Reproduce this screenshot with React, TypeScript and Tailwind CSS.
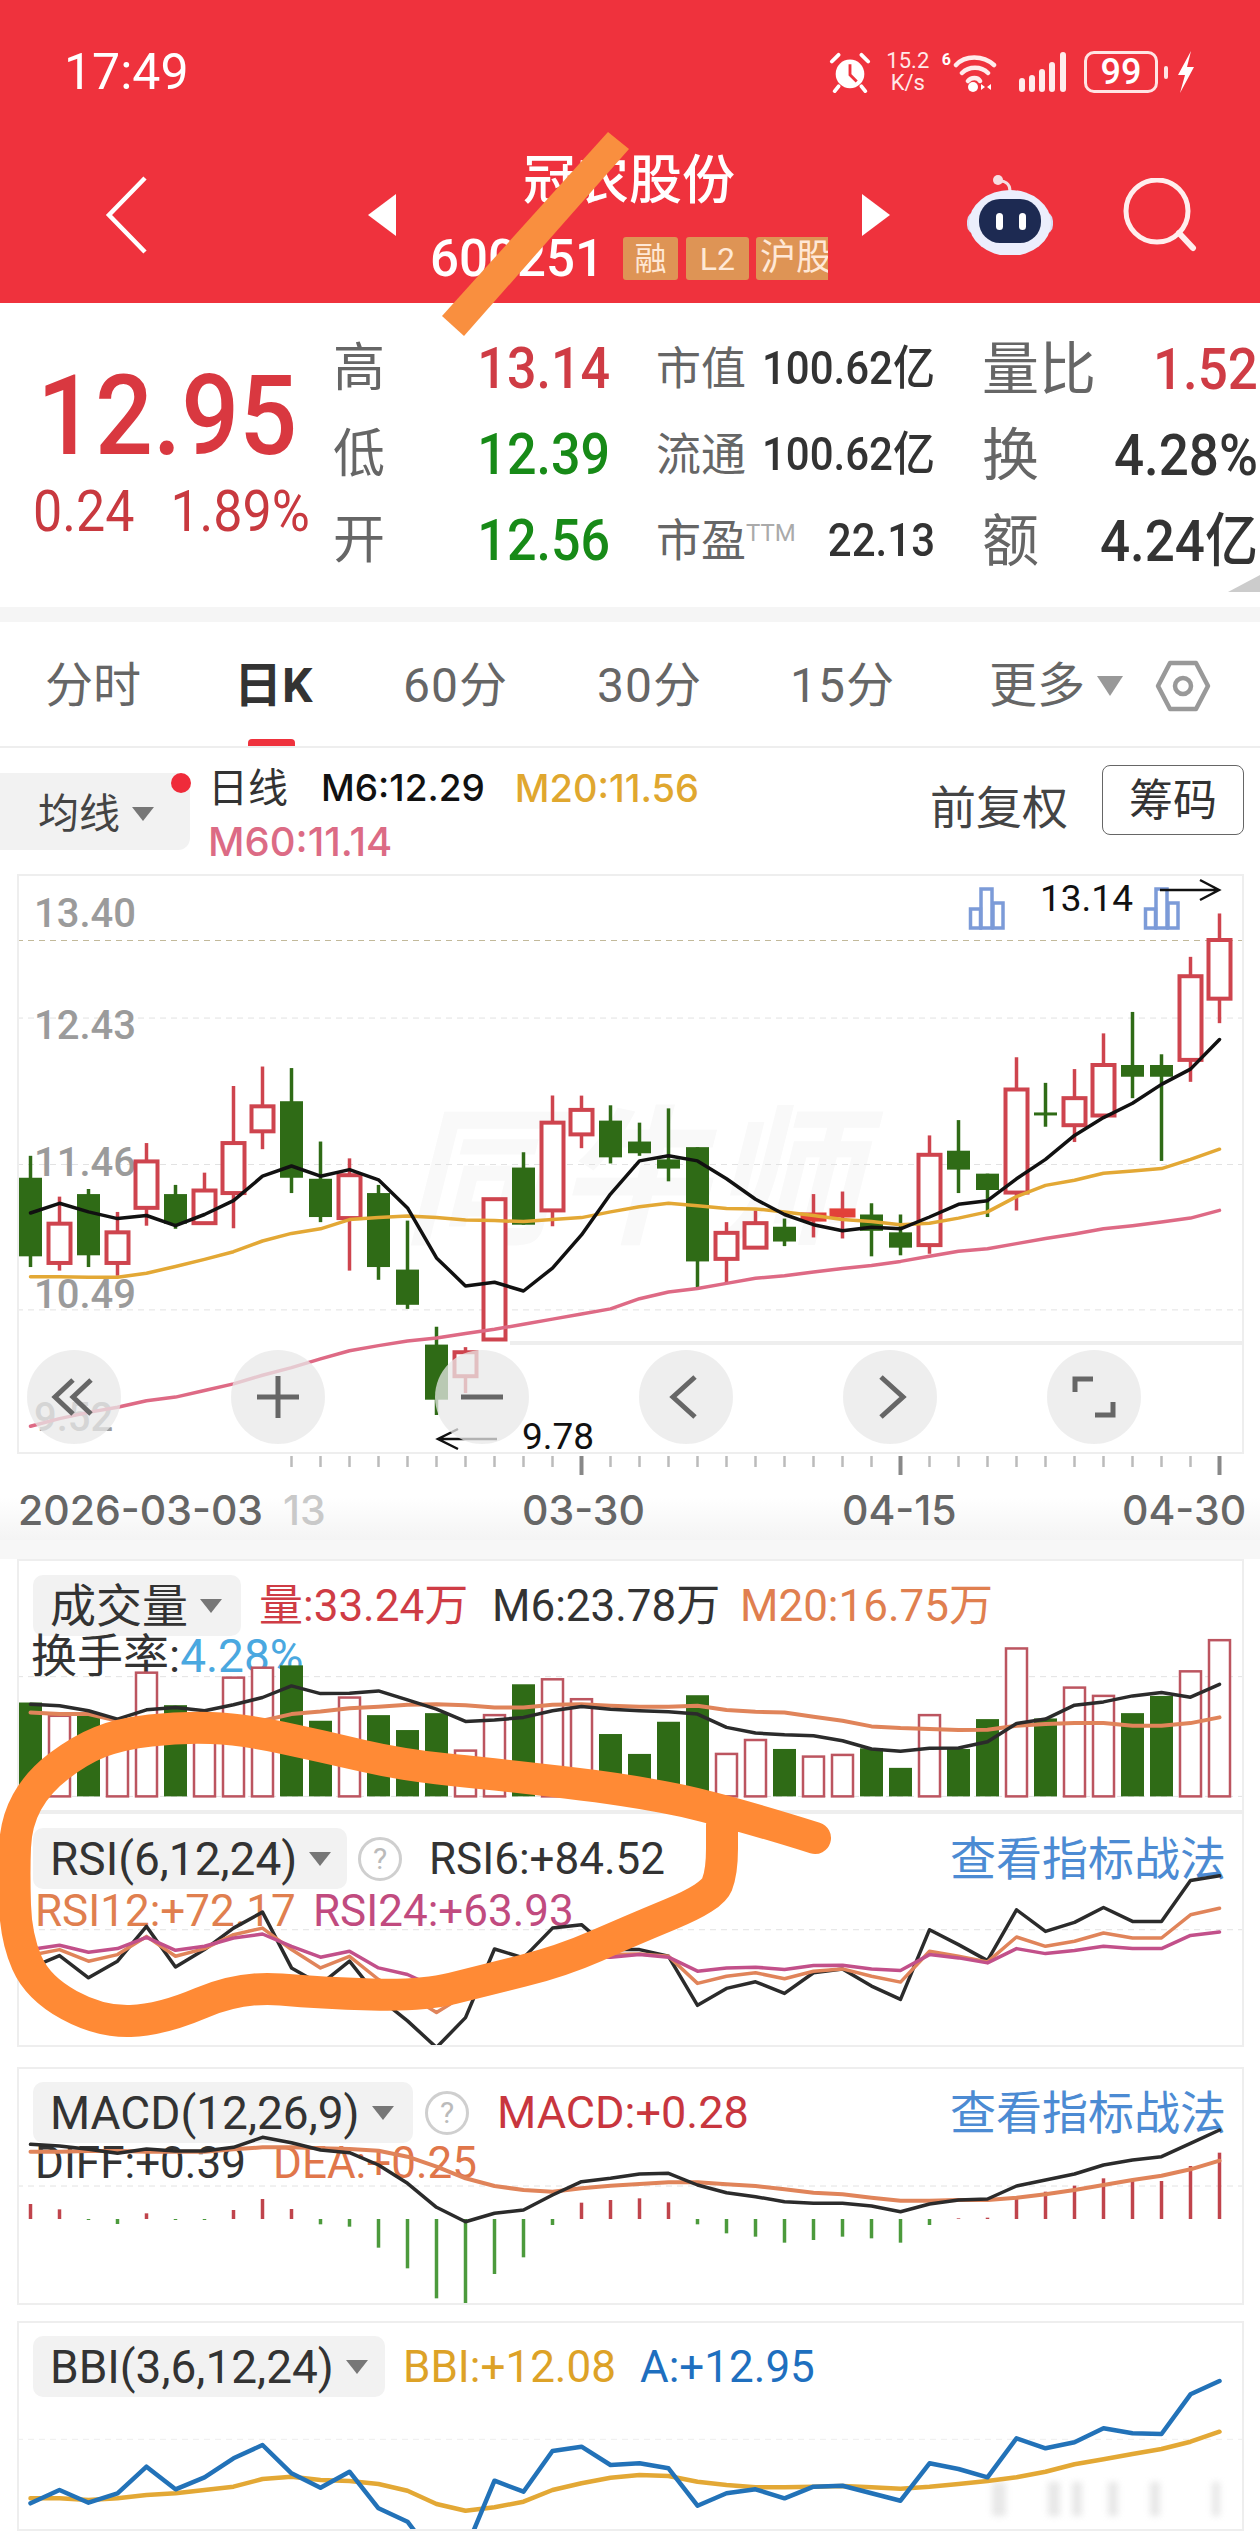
import React from "react";

// x of the n-th bar, same for all the charts
const xAt = (i: number) => 30.5 + 29 * i;

const yMain = (z: number) => 740 + z / 1.96;
const yVol = (z: number) => 1540 + z / 3.015;
const yLow = (z: number) => 2050 + z / 3;

const RED = "#CE444E";
const GREEN = "#2F6B16";

// high, top, bottom, low, up?
const candles: [number, number, number, number, boolean][] = [
  [815, 858, 1012, 1033, false],
  [895, 948, 1025, 1040, true],
  [880, 890, 1010, 1033, false],
  [925, 965, 1025, 1050, true],
  [790, 826, 917, 952, true],
  [872, 890, 948, 958, false],
  [848, 883, 947, 948, true],
  [678, 790, 888, 957, true],
  [640, 718, 767, 802, true],
  [643, 708, 858, 888, false],
  [787, 860, 935, 945, false],
  [820, 853, 937, 1040, true],
  [872, 888, 1033, 1058, false],
  [942, 1038, 1107, 1115, false],
  [1150, 1185, 1293, 1323, false],
  [1190, 1200, 1247, 1280, true],
  [900, 900, 1175, 1175, true],
  [808, 838, 950, 950, false],
  [697, 750, 922, 953, true],
  [697, 725, 773, 800, true],
  [716, 746, 818, 830, false],
  [750, 787, 810, 815, false],
  [722, 822, 840, 865, false],
  [798, 798, 1022, 1072, false],
  [945, 966, 1017, 1065, true],
  [922, 947, 995, 997, true],
  [938, 954, 983, 992, false],
  [890, 930, 940, 975, true],
  [885, 922, 932, 977, true],
  [908, 930, 962, 1012, false],
  [930, 965, 995, 1010, false],
  [775, 813, 990, 1007, true],
  [745, 805, 842, 888, false],
  [850, 850, 882, 935, false],
  [622, 685, 887, 922, true],
  [672, 730, 735, 758, false],
  [645, 702, 755, 788, true],
  [575, 637, 736, 738, true],
  [533, 637, 660, 702, false],
  [616, 637, 660, 825, false],
  [425, 463, 627, 670, true],
  [340, 392, 507, 555, true],
];
const m6 = [927, 908, 925, 938, 932, 952, 930, 903, 855, 835, 855, 842, 862, 917, 1015, 1070, 1063, 1080, 1035, 970, 890, 825, 815, 825, 860, 900, 930, 950, 962, 955, 958, 935, 910, 903, 860, 822, 775, 740, 712, 675, 645, 587];
const m20 = [1052, 1052, 1053, 1053, 1045, 1032, 1018, 1003, 982, 967, 958, 940, 936, 933, 936, 941, 942, 944, 940, 936, 925, 915, 908, 913, 918, 919, 925, 932, 940, 944, 950, 947, 937, 925, 895, 873, 863, 849, 845, 840, 822, 802];
const m60 = [1345, 1330, 1318, 1308, 1295, 1288, 1275, 1262, 1245, 1230, 1213, 1197, 1187, 1178, 1172, 1163, 1155, 1145, 1135, 1125, 1115, 1095, 1082, 1075, 1065, 1055, 1050, 1043, 1036, 1030, 1022, 1012, 1002, 997, 987, 977, 968, 958, 952, 945, 937, 922];

const volTops = [490, 530, 530, 590, 400, 498, 560, 415, 385, 378, 545, 475, 528, 573, 522, 635, 528, 435, 420, 480, 585, 645, 548, 468, 645, 603, 630, 653, 648, 628, 687, 528, 630, 540, 327, 538, 445, 470, 522, 470, 396, 302];
const volUp = [false, true, false, true, true, false, true, true, true, false, false, true, false, false, false, true, true, false, true, true, false, false, false, false, true, true, false, true, true, false, false, true, false, false, true, false, true, true, false, false, true, true];
const volBlack = [495, 500, 515, 540, 512, 505, 515, 497, 475, 440, 463, 462, 455, 482, 510, 547, 543, 535, 515, 502, 510, 515, 518, 525, 565, 582, 587, 590, 605, 630, 637, 628, 627, 608, 553, 540, 498, 488, 470, 460, 474, 435];
const volOrange = [520, 525, 525, 545, 540, 540, 540, 545, 545, 525, 517, 507, 503, 497, 495, 498, 505, 505, 497, 495, 500, 503, 503, 500, 513, 518, 520, 533, 545, 562, 567, 570, 573, 572, 560, 555, 552, 552, 560, 560, 552, 535];

const rsi6 = [1290, 1253, 1320, 1270, 1165, 1287, 1235, 1170, 1122, 1290, 1340, 1270, 1380, 1450, 1530, 1440, 1233, 1260, 1170, 1160, 1235, 1235, 1255, 1403, 1352, 1332, 1367, 1305, 1293, 1345, 1385, 1175, 1220, 1268, 1115, 1180, 1153, 1108, 1150, 1150, 1027, 1012];
const rsi12 = [1252, 1235, 1270, 1250, 1195, 1255, 1232, 1190, 1170, 1235, 1290, 1255, 1325, 1370, 1425, 1370, 1300, 1300, 1250, 1240, 1250, 1248, 1255, 1337, 1315, 1305, 1323, 1300, 1293, 1315, 1333, 1240, 1255, 1272, 1197, 1225, 1210, 1185, 1200, 1200, 1130, 1110];
const rsi24 = [1235, 1222, 1243, 1232, 1198, 1237, 1225, 1200, 1188, 1225, 1258, 1240, 1290, 1310, 1350, 1330, 1300, 1290, 1265, 1255, 1258, 1250, 1258, 1300, 1290, 1288, 1295, 1283, 1282, 1293, 1298, 1250, 1260, 1275, 1232, 1247, 1238, 1225, 1232, 1232, 1192, 1182];

const macdBars = [462, 478, 510, 522, 490, 510, 510, 480, 447, 477, 523, 530, 593, 655, 745, 765, 672, 622, 525, 458, 450, 445, 457, 523, 550, 560, 578, 570, 560, 565, 578, 525, 505, 503, 447, 425, 407, 385, 388, 393, 348, 308];
const diff = [283, 288, 298, 310, 297, 303, 303, 292, 262, 278, 300, 308, 345, 400, 472, 515, 490, 480, 435, 395, 385, 372, 370, 405, 428, 440, 455, 460, 460, 468, 485, 462, 450, 447, 408, 390, 372, 345, 330, 320, 280, 240];
const dea = [305, 305, 303, 303, 305, 305, 305, 298, 292, 292, 295, 297, 302, 320, 350, 385, 408, 420, 425, 415, 407, 402, 397, 397, 403, 408, 418, 428, 433, 443, 452, 452, 450, 450, 443, 433, 420, 405, 390, 377, 358, 332];

const bbiA = [1360, 1320, 1358, 1330, 1250, 1318, 1282, 1225, 1185, 1270, 1313, 1265, 1375, 1415, 1530, 1500, 1292, 1325, 1203, 1190, 1245, 1240, 1255, 1367, 1330, 1318, 1345, 1310, 1307, 1330, 1352, 1240, 1257, 1282, 1165, 1195, 1177, 1135, 1150, 1152, 1033, 993];
const bbiY = [1345, 1345, 1350, 1345, 1335, 1330, 1320, 1310, 1287, 1280, 1290, 1293, 1302, 1322, 1362, 1382, 1372, 1355, 1320, 1300, 1283, 1275, 1278, 1295, 1305, 1312, 1312, 1310, 1308, 1312, 1316, 1310, 1302, 1293, 1282, 1265, 1243, 1228, 1212, 1197, 1175, 1145];

const Line = ({ data, y, color, w = 3.5 }: { data: number[]; y: (z: number) => number; color: string; w?: number }) => (
  <polyline
    points={data.map((z, i) => `${xAt(i)},${y(z).toFixed(1)}`).join(" ")}
    fill="none"
    stroke={color}
    strokeWidth={w}
    strokeLinejoin="round"
    strokeLinecap="round"
  />
);

const Dash = ({ y, color = "#e2e2e2" }: { y: number; color?: string }) => (
  <line x1={17} x2={1244} y1={y} y2={y} stroke={color} strokeWidth={1} strokeDasharray="6 5" />
);

const Triangle = ({ className = "" }: { className?: string }) => (
  <svg viewBox="0 0 22 14" className={`w-[22px] h-[14px] shrink-0 ${className}`}>
    <path d="M0 0H22L11 14Z" fill="#777" />
  </svg>
);

const Selector = ({ label, width }: { label: string; width: string }) => (
  <div className={`${width} h-[61px] bg-[#f2f2f2] rounded-[10px] flex items-center pl-[17px] shrink-0`}>
    <span className="text-[46px] leading-none text-[#333] whitespace-nowrap">{label}</span>
    <Triangle className="ml-[12px]" />
  </div>
);

const Help = () => (
  <div className="w-[44px] h-[44px] rounded-full border-[3px] border-[#cfcfcf] text-[#bbb] text-[30px] leading-none flex items-center justify-center shrink-0">?</div>
);

const Tactics = () => (
  <span className="ml-auto mr-[18px] text-[46px] leading-none text-[#4C8BD3] whitespace-nowrap">查看指标战法</span>
);

const Mini = ({ d, className = "" }: { d: string; className?: string }) => (
  <svg viewBox="0 0 50 50" className={`w-[50px] h-[50px] ${className}`} fill="none" stroke="#666" strokeWidth={5}>
    <path d={d} />
  </svg>
);

const StatusBar = () => (
  <div className="h-[144px] flex items-center pl-[64px] pr-[65px] text-white">
    <span className="text-[50px] leading-none">17:49</span>
    <div className="ml-auto flex items-center">
      <svg viewBox="0 0 44 44" className="w-[42px] h-[42px]">
        <circle cx="22" cy="24" r="15" fill="#fff" />
        <path d="M22 14V25L29 32" stroke="#EF323D" strokeWidth="3" fill="none" />
        <path d="M3 11L10 4M41 11L34 4M10 37L6 42M34 37L38 42" stroke="#fff" strokeWidth="4" strokeLinecap="round" />
      </svg>
      <div className="ml-[13px] w-[48px] flex flex-col items-center text-[22px] leading-[22px] text-[#ffe9e9]">
        <span>15.2</span>
        <span>K/s</span>
      </div>
      <span className="ml-[10px] self-start mt-[2px] text-[16px] leading-none font-bold">6</span>
      <svg viewBox="0 0 44 42" className="ml-[2px] w-[44px] h-[42px]">
        <path d="M3 14C12 4 30 4 41 14M9 22C16 15 28 15 35 22M15 30C18 26 25 26 27 30" stroke="#ffecec" strokeWidth="4.5" fill="none" strokeLinecap="round" />
        <circle cx="20" cy="36" r="5" fill="#fff" />
        <path d="M28 33V39L32 36ZM38 33V39L34 36Z" fill="#fff" />
      </svg>
      <svg viewBox="0 0 50 40" className="ml-[22px] w-[50px] h-[40px]">
        <path d="M3 29V37M13 26V37M23 20V37M33 13V37M44 3V37" stroke="#ffecec" strokeWidth="6" strokeLinecap="round" />
      </svg>
      <div className="ml-[15px] w-[74px] h-[42px] rounded-[10px] border-[3px] border-[#ffe4e4] flex items-center justify-center text-[36px] leading-none font-medium">99</div>
      <div className="ml-[6px] w-[4px] h-[13px] rounded bg-[#ffe4e4]"></div>
      <svg viewBox="0 0 18 42" className="ml-[9px] w-[18px] h-[42px]">
        <path d="M14 0L1 24H8L3 42L17 16H10Z" fill="#fff" />
      </svg>
    </div>
  </div>
);

const NavBar = () => (
  <div className="h-[159px] pb-[18px] pl-[105px] flex items-center text-white">
    <svg viewBox="0 0 42 78" className="w-[42px] h-[78px] shrink-0">
      <path d="M40 2L4 39L40 76" fill="none" stroke="#fff" strokeWidth="4.5" />
    </svg>
    <svg viewBox="0 0 28 42" className="ml-[221px] w-[28px] h-[42px] shrink-0">
      <path d="M28 0V42L0 21Z" fill="#fff" />
    </svg>
    <div className="w-[466px] h-[132px] shrink-0 flex flex-col items-center">
      <span className="text-[53px] leading-[64px] font-medium">冠农股份</span>
      <div className="mt-[24px] h-[44px] flex items-center">
        <span className="text-[51px] leading-none font-medium">600251</span>
        <span className="ml-[19px] w-[55px] h-[43px] rounded-[3px] bg-[#DE9455] text-[#ffe8d6] text-[32px] leading-none flex items-center justify-center">融</span>
        <span className="ml-[8px] w-[63px] h-[43px] rounded-[3px] bg-[#DE9455] text-[#ffe8d6] text-[32px] leading-none flex items-center justify-center">L2</span>
        <span className="ml-[7px] w-[72px] h-[43px] overflow-hidden rounded-l-[3px] bg-[#DE9455] text-[#ffe8d6] text-[36px] leading-[43px] pl-[4px] whitespace-nowrap">沪股</span>
      </div>
    </div>
    <svg viewBox="0 0 28 42" className="w-[28px] h-[42px] shrink-0">
      <path d="M0 0V42L28 21Z" fill="#fff" />
    </svg>
    <svg viewBox="0 0 90 80" className="ml-[76px] w-[90px] h-[80px] shrink-0">
      <path d="M44 16C44 8 38 6 34 6" stroke="#f4dfe3" strokeWidth="3" fill="none" />
      <circle cx="32" cy="5" r="5" fill="#f6dfe3" />
      <rect x="1" y="36" width="86" height="24" rx="10" fill="#d9dcf3" />
      <ellipse cx="44" cy="48" rx="41" ry="33" fill="#eceefc" />
      <rect x="13" y="24" width="62" height="44" rx="21" fill="#1d2a52" />
      <rect x="30" y="38" width="7" height="17" rx="3.5" fill="#fff" />
      <rect x="53" y="38" width="7" height="17" rx="3.5" fill="#fff" />
    </svg>
    <svg viewBox="0 0 74 74" className="ml-[67px] w-[74px] h-[74px] shrink-0">
      <circle cx="34" cy="33" r="31" fill="none" stroke="#ffeeee" strokeWidth="5" />
      <path d="M56 55L70 70" stroke="#ffeeee" strokeWidth="6" strokeLinecap="round" />
    </svg>
  </div>
);

const statRows = [
  { l: "高", v: "13.14", vc: "text-[#CF3C45]", a: "市值", av: "100.62亿", b: "量比", bv: "1.52", bc: "text-[#CF3C45]" },
  { l: "低", v: "12.39", vc: "text-[#178A17]", a: "流通", av: "100.62亿", b: "换", bv: "4.28%", bc: "text-[#333]" },
  { l: "开", v: "12.56", vc: "text-[#178A17]", a: "市盈", av: "22.13", b: "额", bv: "4.24亿", bc: "text-[#333]" },
];

const Quote = () => (
  <div className="relative h-[304px] pl-[33px] flex">
    <div className="w-[300px] shrink-0 pt-[52px]">
      <div className="pl-[4px] text-[102px] leading-[120px] text-[#D93840] font-medium scale-y-[1.1]">12.95</div>
      <div className="mt-[7px] text-[52px] leading-[60px] text-[#C8393F] whitespace-nowrap scale-y-[1.1]">
        0.24<span className="ml-[36px]">1.89%</span>
      </div>
    </div>
    <div className="pt-[23px] grid grid-cols-[52px_225px_135px_190px_158px_165px] auto-rows-[86px] items-center">
      {statRows.map((r) => (
        <React.Fragment key={r.l}>
          <span className="text-[52px] leading-none text-[#666]">{r.l}</span>
          <span className={`text-right text-[52px] leading-none font-medium scale-y-[1.1] ${r.vc}`}>{r.v}</span>
          <span className="pl-[46px] text-[45px] leading-none text-[#666] whitespace-nowrap">
            {r.a}
            {r.a === "市盈" && <sup className="text-[24px] text-[#aaa] top-[-16px] align-baseline relative">TTM</sup>}
          </span>
          <span className="text-right text-[42px] leading-none text-[#333] font-medium scale-y-[1.1]">{r.av}</span>
          <span className="pl-[47px] text-[57px] leading-none text-[#666] whitespace-nowrap">{r.b}</span>
          <span className={`text-right text-[53px] leading-none font-medium whitespace-nowrap scale-y-[1.1] ${r.bc}`}>{r.bv}</span>
        </React.Fragment>
      ))}
    </div>
    <svg viewBox="0 0 32 17" className="absolute right-0 bottom-[15px] w-[32px] h-[17px]">
      <path d="M0 17L32 0V17Z" fill="#ccc" />
    </svg>
  </div>
);

const Tabs = () => (
  <div className="h-[126px] pt-[3px] border-b-[2px] border-[#eee] flex items-center pl-[45px] text-[48px] leading-[56px] text-[#666] whitespace-nowrap">
    <span className="w-[189px]">分时</span>
    <span className="relative w-[169px] font-bold text-[#333]">
      日K
      <span className="absolute left-[14px] top-[81px] w-[47px] h-[7px] rounded-t bg-[#EF323D]"></span>
    </span>
    <span className="w-[194px] tracking-[1px]">60分</span>
    <span className="w-[193px] tracking-[1px]">30分</span>
    <span className="w-[199px] tracking-[1px]">15分</span>
    <span className="w-[108px]">更多</span>
    <svg viewBox="0 0 26 20" className="w-[26px] h-[20px]">
      <path d="M0 0H26L13 20Z" fill="#999" />
    </svg>
    <svg viewBox="0 0 56 52" className="ml-[32px] w-[56px] h-[52px]">
      <path d="M15 3H41L53 26L41 49H15L3 26Z" fill="none" stroke="#999" strokeWidth="4.5" strokeLinejoin="round" />
      <circle cx="28" cy="26" r="8" fill="none" stroke="#999" strokeWidth="4.5" />
    </svg>
  </div>
);

const Legend = () => (
  <div className="h-[126px] flex items-start [font-family:Inter,'Noto_Sans_CJK_SC',sans-serif]">
    <div className="relative mt-[25px] w-[190px] h-[77px] bg-[#f2f2f2] rounded-r-[12px] flex items-center pl-[38px] pt-[4px] shrink-0">
      <span className="text-[41px] leading-none text-[#444]">均线</span>
      <Triangle className="ml-[12px]" />
      <span className="absolute left-[171px] top-[0px] w-[20px] h-[20px] rounded-full bg-[#EF2B3A]"></span>
    </div>
    <div className="ml-[18px] pt-[15px] text-[37px] leading-[50px] font-medium whitespace-nowrap">
      <div className="flex">
        <span className="text-[40px] font-normal text-[#333]">日线</span>
        <span className="ml-[33px] text-[#111]">M6:12.29</span>
        <span className="ml-[30px] text-[38px] text-[#E0A72F]">M20:11.56</span>
      </div>
      <div className="mt-[4px] text-[40px] text-[#DC6B85]">M60:11.14</div>
    </div>
    <div className="ml-auto mr-[16px] flex items-start pt-[17px]">
      <span className="mt-[14px] text-[46px] leading-[56px] text-[#444]">前复权</span>
      <span className="ml-[34px] w-[142px] h-[70px] border border-[#666] rounded-[8px] text-[44px] leading-none text-[#333] flex items-center justify-center">筹码</span>
    </div>
  </div>
);

const ChartButtons = () => (
  <div className="col-start-1 row-start-1 pl-[10px] pt-[476px] flex gap-[110px]">
    {[
      "M24 8L6 25L24 42M42 8L24 25L42 42",
      "M4 25H46M25 4V46",
      "M4 25H46",
      "M34 5L12 25L34 45",
      "M16 5L38 25L16 45",
      "M6 20V7H24M44 30V43H26",
    ].map((d) => (
      <div key={d} className="w-[94px] h-[94px] rounded-full bg-[#e8e8e8]/75 flex items-center justify-center shrink-0">
        <Mini d={d} />
      </div>
    ))}
  </div>
);

const BarIcon = ({ x }: { x: number }) => (
  <g fill="none" stroke="#7C9BD8" strokeWidth="3.5">
    <rect x={x + 1.5} y={909} width={10} height={19} />
    <rect x={x + 12} y={889} width={11} height={39} />
    <rect x={x + 24} y={903} width={10} height={25} />
  </g>
);

const MainChart = () => (
  <div className="ml-[17px] w-[1227px] h-[580px] grid outline-2 -outline-offset-2 outline-[#eeeeee]">
    <svg viewBox="17 874 1227 580" className="col-start-1 row-start-1 w-full h-full overflow-visible [font-family:Roboto,'Noto_Sans_CJK_SC',sans-serif]">
      <text x="403" y="1232" fontSize="150" fontWeight="700" fontStyle="italic" fill="#f9f9f9" textLength="457">同牛师</text>
      <rect x="510" y="1341" width="734" height="4" fill="#eeeeee" />
      <Dash y={yMain(393)} color="#c2b99a" />
      <Dash y={yMain(545)} />
      <Dash y={yMain(832)} />
      <Dash y={yMain(1117)} />
      <g fontSize="40" fill="#9b9b9b" fontWeight="500">
        <text x="34" y="927">13.40</text>
        <text x="34" y="1039">12.43</text>
        <text x="34" y="1176">11.46</text>
        <text x="34" y="1308">10.49</text>
        <text x="34" y="1431">9.52</text>
      </g>
      {candles.map(([h, t, b, l, up], i) => {
        const x = xAt(i);
        const c = up ? RED : GREEN;
        const flat = up && b - t < 20;
        return (
          <g key={i}>
            <line x1={x} x2={x} y1={yMain(h)} y2={yMain(l)} stroke={c} strokeWidth={3.5} />
            {up ? (
              <rect
                x={x - 11}
                y={yMain(t)}
                width={22}
                height={yMain(b) - yMain(t)}
                fill={flat ? "#E2403A" : "#fff"}
                stroke={flat ? "#E2403A" : c}
                strokeWidth={4}
              />
            ) : (
              <rect x={x - 11.5} y={yMain(t)} width={23} height={Math.max(yMain(b) - yMain(t), 3)} fill={c} />
            )}
          </g>
        );
      })}
      <Line data={m20} y={yMain} color="#E3A835" />
      <Line data={m60} y={yMain} color="#DE6A85" />
      <Line data={m6} y={yMain} color="#111" />
      <BarIcon x={969} />
      <BarIcon x={1144} />
      <g fill="#111" fontSize="37">
        <text x="1040" y="911">13.14</text>
        <text x="522" y="1449">9.78</text>
      </g>
      <path d="M1160 890H1219M1200 880L1219 890L1200 900" fill="none" stroke="#111" strokeWidth="2.5" />
      <path d="M497 1439H438M458 1429L438 1439L458 1449" fill="none" stroke="#111" strokeWidth="2.5" />
    </svg>
    <ChartButtons />
  </div>
);

const TimeAxis = () => (
  <div className="h-[86px] bg-linear-to-b from-white from-50% to-[#f4f4f4]">
    <svg viewBox="0 1454 1260 24" className="block w-[1260px] h-[24px]">
      {candles.map((_, i) => {
        if (i < 9) return null;
        const big = i === 19 || i === 30 || i === 41;
        return <line key={i} x1={xAt(i)} x2={xAt(i)} y1={1456} y2={big ? 1475 : 1467} stroke={big ? "#888" : "#bbb"} strokeWidth={big ? 4 : 2.5} />;
      })}
    </svg>
    <div className="pl-[18px] h-[60px] pt-[4px] flex items-center text-[41px] leading-none font-medium text-[#666] whitespace-nowrap [font-family:Inter,sans-serif]">
      <span className="w-[265px]">2026-03-03</span>
      <span className="w-[239px] text-[#c9c9c9]">13</span>
      <span className="w-[320px]">03-30</span>
      <span className="w-[280px]">04-15</span>
      <span>04-30</span>
    </div>
  </div>
);

const VolumePanel = () => (
  <div className="ml-[17px] w-[1227px] h-[253px] grid outline-2 -outline-offset-2 outline-[#eeeeee]">
    <div className="col-start-1 row-start-1 pl-[16px] pt-[16px]">
      <div className="flex items-center text-[44px] leading-none whitespace-nowrap">
        <Selector label="成交量" width="w-[208px]" />
        <span className="ml-[18px] w-[233px] text-[#CF3C45]">量:33.24万</span>
        <span className="w-[248px] text-[#333]">M6:23.78万</span>
        <span className="text-[#E07F4F]">M20:16.75万</span>
      </div>
      <div className="text-[46px] leading-[46px] mt-[-3px] ml-[-2px] text-[#333] whitespace-nowrap">
        换手率:<span className="text-[#4AA8E0]">4.28%</span>
      </div>
    </div>
    <svg viewBox="17 1559 1227 253" className="col-start-1 row-start-1 w-full h-full">
      <Dash y={yVol(412)} />
      <Dash y={yVol(773)} />
      {volTops.map((z, i) => {
        const y = yVol(z);
        const h = yVol(773) - y;
        return volUp[i] ? (
          <rect key={i} x={xAt(i) - 10.5} y={y} width={21} height={h} fill="#fff" stroke="#BC5560" strokeWidth={2.5} />
        ) : (
          <rect key={i} x={xAt(i) - 11.5} y={y} width={23} height={h} fill={GREEN} />
        );
      })}
      <Line data={volOrange} y={yVol} color="#E0845A" w={4} />
      <Line data={volBlack} y={yVol} color="#2b2b2b" />
    </svg>
  </div>
);

const RsiPanel = () => (
  <div className="ml-[17px] w-[1227px] h-[235px] grid outline-2 -outline-offset-2 outline-[#eeeeee]">
    <div className="col-start-1 row-start-1 pl-[16px] pt-[16px]">
      <div className="flex items-center text-[44px] leading-none whitespace-nowrap">
        <Selector label="RSI(6,12,24)" width="w-[314px]" />
        <span className="ml-[11px]"><Help /></span>
        <span className="ml-[27px] text-[#333]">RSI6:+84.52</span>
        <Tactics />
      </div>
      <div className="mt-[-4px] flex text-[44px] leading-[52px] whitespace-nowrap">
        <span className="w-[280px] pl-[2px] text-[#E07F4F]">RSI12:+72.17</span>
        <span className="text-[#C14B7F]">RSI24:+63.93</span>
      </div>
    </div>
    <svg viewBox="17 1812 1227 235" className="col-start-1 row-start-1 w-full h-full">
      <Dash y={yVol(1175)} />
      <Line data={rsi6} y={yVol} color="#2b2b2b" />
      <Line data={rsi12} y={yVol} color="#E0845A" />
      <Line data={rsi24} y={yVol} color="#C2508A" />
    </svg>
  </div>
);

const MacdPanel = () => (
  <div className="mt-[20px] ml-[17px] w-[1227px] h-[238px] grid outline-2 -outline-offset-2 outline-[#eeeeee]">
    <div className="col-start-1 row-start-1 pl-[16px] pt-[15px]">
      <div className="flex items-center text-[45px] leading-none whitespace-nowrap">
        <Selector label="MACD(12,26,9)" width="w-[380px]" />
        <span className="ml-[12px]"><Help /></span>
        <span className="ml-[28px] text-[#C8363E]">MACD:+0.28</span>
        <Tactics />
      </div>
      <div className="mt-[-6px] flex text-[44px] leading-[52px] whitespace-nowrap">
        <span className="w-[240px] pl-[2px] text-[#333]">DIFF:+0.39</span>
        <span className="text-[#E0764A]">DEA:+0.25</span>
      </div>
    </div>
    <svg viewBox="17 2067 1227 238" className="col-start-1 row-start-1 w-full h-full">
      <Dash y={yLow(408)} />
      {macdBars.map((z, i) => (
        <line
          key={i}
          x1={xAt(i)}
          x2={xAt(i)}
          y1={yLow(507)}
          y2={yLow(z)}
          stroke={z < 507 ? "#C0444C" : "#4C9A3C"}
          strokeWidth={3.5}
        />
      ))}
      <Line data={dea} y={yLow} color="#E0845A" w={4} />
      <Line data={diff} y={yLow} color="#2b2b2b" />
    </svg>
  </div>
);

const BbiPanel = () => (
  <div className="mt-[16px] ml-[17px] w-[1227px] h-[210px] grid outline-2 -outline-offset-2 outline-[#eeeeee]">
    <div className="col-start-1 row-start-1 pl-[16px] pt-[15px]">
      <div className="flex items-center text-[44px] leading-none whitespace-nowrap">
        <Selector label="BBI(3,6,12,24)" width="w-[352px]" />
        <span className="ml-[18px] w-[237px] text-[#DDA227]">BBI:+12.08</span>
        <span className="text-[#1E6FBF]">A:+12.95</span>
      </div>
    </div>
    <svg viewBox="17 2321 1227 210" className="col-start-1 row-start-1 w-full h-full">
      <Dash y={yLow(1168)} color="#eeeeee" />
      <g fill="#d8d8d8" opacity="0.6" className="blur-[3px]">
        <rect x="992" y="2482" width="14" height="34" />
        <rect x="1048" y="2482" width="12" height="34" />
        <rect x="1072" y="2482" width="10" height="34" />
        <rect x="1108" y="2482" width="10" height="34" />
        <rect x="1150" y="2482" width="10" height="34" />
        <rect x="1212" y="2482" width="8" height="34" />
      </g>
      <Line data={bbiY} y={yLow} color="#E3A835" w={4.5} />
      <Line data={bbiA} y={yLow} color="#2272B8" w={4.5} />
    </svg>
  </div>
);

const smooth = (pts: number[][]) => {
  let d = `M${pts[0][0]} ${pts[0][1]}`;
  for (let i = 1; i < pts.length - 1; i++) {
    const mx = (pts[i][0] + pts[i + 1][0]) / 2;
    const my = (pts[i][1] + pts[i + 1][1]) / 2;
    d += `Q${pts[i][0]} ${pts[i][1]} ${mx} ${my}`;
  }
  const last = pts[pts.length - 1];
  return d + `L${last[0]} ${last[1]}`;
};

const scribble = smooth([
  [815, 1838], [722, 1809], [630, 1790], [502, 1775], [402, 1765], [321, 1746], [241, 1729], [181, 1727],
  [120, 1734], [80, 1750], [38, 1782], [16, 1822], [14, 1872], [16, 1938], [38, 1988], [100, 2022],
  [161, 2020], [241, 1986], [321, 1993], [422, 1996], [482, 1981], [562, 1961], [630, 1931], [712, 1897],
  [722, 1872], [722, 1825],
]);

// hand-drawn marks someone put on top of the screenshot
const Markup = () => (
  <svg viewBox="0 0 1260 2531" className="absolute inset-0 w-[1260px] h-[2531px] pointer-events-none">
    <path d="M608 132L629 149L464 336L442 316Z" fill="#F98F3F" />
    <path d={scribble} fill="none" stroke="#FF8A35" strokeWidth="32" strokeLinecap="round" strokeLinejoin="round" />
  </svg>
);

export default function App() {
  return (
    <div className="relative w-[1260px] h-[2531px] overflow-hidden bg-white [font-family:Roboto,'Noto_Sans_CJK_SC',sans-serif]">
      <header className="h-[303px] bg-[#EF323D]">
        <StatusBar />
        <NavBar />
      </header>
      <Quote />
      <div className="h-[15px] bg-[#f5f5f5]"></div>
      <Tabs />
      <Legend />
      <MainChart />
      <TimeAxis />
      <div className="h-[19px] bg-[#f7f7f7]"></div>
      <VolumePanel />
      <RsiPanel />
      <MacdPanel />
      <BbiPanel />
      <Markup />
    </div>
  );
}
